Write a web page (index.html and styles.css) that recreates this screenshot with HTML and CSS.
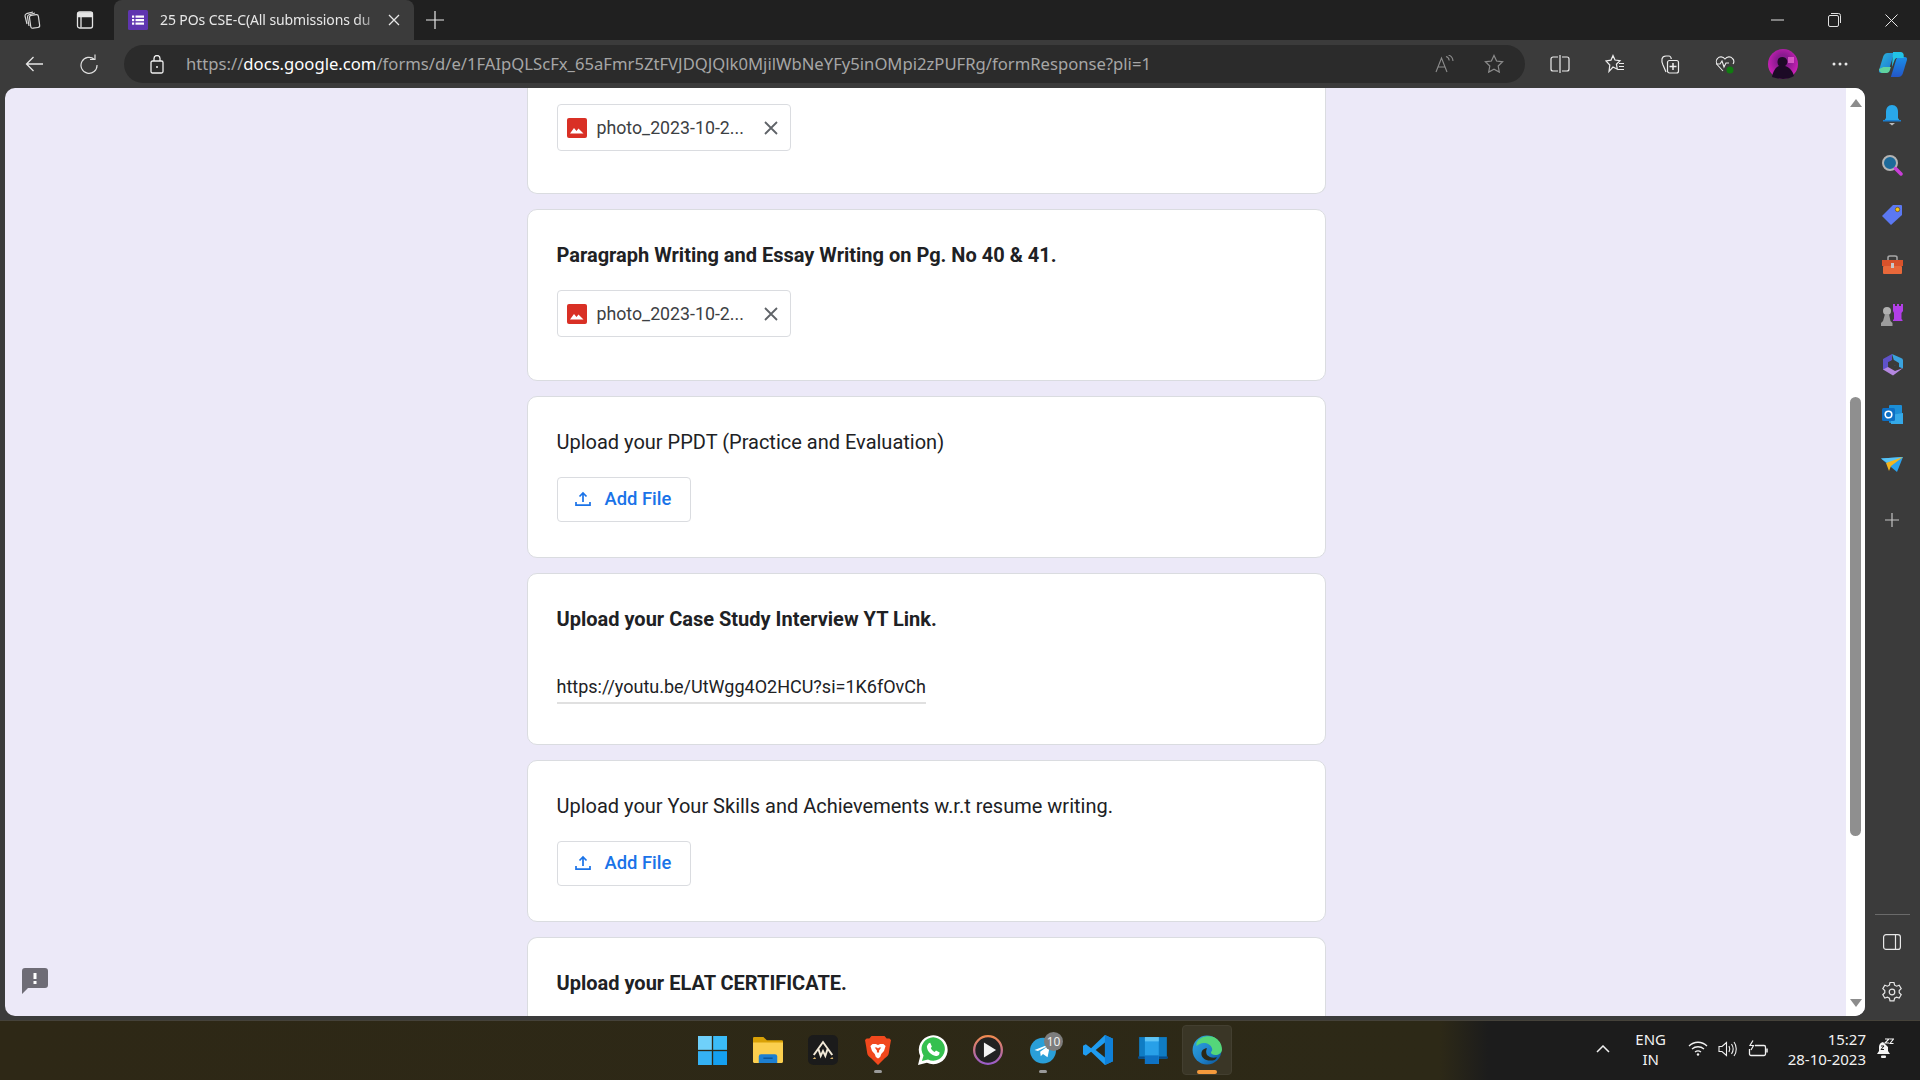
FILE: index.html
```html
<!DOCTYPE html>
<html lang="en">
<head>
<meta charset="utf-8">
<title>25 POs CSE-C</title>
<link rel="stylesheet" href="styles.css">
</head>
<body>
<div class="window">
  <header class="titlebar">
    <div class="tb-left">
      <svg width="20" height="20" viewBox="0 0 20 20" fill="none" stroke="#d8d8d8" stroke-width="1.2"><rect x="8" y="5" width="9" height="13" rx="2" transform="rotate(-8 12 11)"/><path d="M5 14 3 6c0-1 .5-2 1.500-2.300L11 2M7 16 5.500 7c0-1 .5-2 1.500-2.300L13 3"/></svg>
      <svg width="20" height="20" viewBox="0 0 20 20" fill="none" stroke="#e4e4e4" stroke-width="1.300"><rect x="2.500" y="2" width="15" height="16" rx="2"/><path d="M3 3h14v3.500H3z" fill="#e4e4e4"/><path d="M6 6v11.500"/></svg>
    </div>
    <div class="tab">
      <svg width="20" height="20" viewBox="0 0 20 20"><rect width="20" height="20" rx="1.500" fill="#5f35b0"/><g fill="#fff"><rect x="4" y="5.500" width="2.200" height="2.200"/><rect x="4" y="9" width="2.200" height="2.200"/><rect x="4" y="12.500" width="2.200" height="2.200"/><rect x="7.500" y="5.500" width="8.500" height="2.200"/><rect x="7.500" y="9" width="8.500" height="2.200"/><rect x="7.500" y="12.500" width="8.500" height="2.200"/></g></svg>
      <span class="tab-title">25 POs CSE-C(All submissions du</span>
      <svg width="12" height="12" viewBox="0 0 12 12" stroke="#e8e8e8" stroke-width="1.300"><path d="M1 1l10 10M11 1 1 11"/></svg>
    </div>
    <svg class="newtab" width="18" height="18" viewBox="0 0 18 18" stroke="#e8e8e8" stroke-width="1.200"><path d="M9 0v18M0 9h18"/></svg>
    <div class="wincontrols">
      <svg width="13" height="12" viewBox="0 0 13 12" stroke="#e0e0e0" stroke-width="1"><path d="M0 6h13"/></svg>
      <svg width="13" height="14" viewBox="0 0 13 14" fill="none" stroke="#e0e0e0" stroke-width="1"><rect x=".5" y="2.500" width="10" height="11" rx="1.500"/><path d="M3 .5h7.500a2 2 0 0 1 2 2V10"/></svg>
      <svg width="13" height="13" viewBox="0 0 13 13" stroke="#e8e8e8" stroke-width="1"><path d="M.5.500l12 12M12.500.500l-12 12"/></svg>
    </div>
  </header>
  <nav class="toolbar">
    <svg class="nav-back" width="18" height="16" viewBox="0 0 18 16" fill="none" stroke="#e6e6e6" stroke-width="1.300"><path d="M18 8H1.500M8.500 1 1.500 8l7 7"/></svg>
    <svg class="nav-reload" width="18" height="20" viewBox="0 0 18 20" fill="none" stroke="#e0e0e0" stroke-width="1.200"><path d="M14.500 5.500A8 8 0 1 0 17 11"/><path d="M15 .5v5h-5"/></svg>
    <div class="omnibox">
      <svg width="14" height="19" viewBox="0 0 14 19" fill="none" stroke="#f0f0f0" stroke-width="1.300"><rect x="1" y="6" width="12" height="12" rx="1.500"/><path d="M4 6V3.500a3 3 0 0 1 6 0V6"/><circle cx="7" cy="12" r="1" fill="#f0f0f0" stroke="none"/></svg>
      <span class="url"><span class="url-dim">https://</span><span class="url-host">docs.google.com</span><span class="url-dim">/forms/d/e/1FAIpQLScFx_65aFmr5ZtFVJDQJQlk0MjilWbNeYFy5inOMpi2zPUFRg/formResponse?pli=1</span></span>
      <svg class="readaloud" width="20" height="18" viewBox="0 0 20 18" fill="none" stroke="#8c8c8c" stroke-width="1.100"><path d="M1 17 6.500 3l5.500 14M3 12h7"/><path d="M11 1.500c2 .5 3 2 3.200 4M13.500 0c2.800 1 4.300 3 4.500 6"/></svg>
      <svg width="20" height="20" viewBox="0 0 20 20" fill="none" stroke="#8c8c8c" stroke-width="1.200"><path d="m10 1.500 2.600 5.500 6 .8-4.400 4.200 1.100 6L10 15.100 4.700 18l1.100-6L1.400 7.800l6-.8z"/></svg>
    </div>
    <div class="tools">
      <svg width="20" height="20" viewBox="0 0 20 20" fill="none" stroke="#ececec" stroke-width="1.200"><path d="M8 3H3a2 2 0 0 0-2 2v10a2 2 0 0 0 2 2h5M12 3h5a2 2 0 0 1 2 2v10a2 2 0 0 1-2 2h-5M10 1v18"/></svg>
      <svg width="20" height="20" viewBox="0 0 20 20" fill="none" stroke="#ececec" stroke-width="1.200"><path d="m8 1.500 2 4.500 5 .7-3.600 3.500.9 5L8 13 4 17.500l.8-6.500L1 7l5-.9zM14 9.500h5M14 12.500h5M13 15.500h6"/></svg>
      <svg width="20" height="20" viewBox="0 0 20 20" fill="none" stroke="#ececec" stroke-width="1.200"><path d="M6 18 3 11c-.8-2-1.500-4-1-6 .4-2 2-3 4-3h3c1.500 0 2 1 2.300 3"/><rect x="7.500" y="6.500" width="11" height="12.500" rx="2"/><path d="M13 9v7M9.500 12.500h7" stroke-width="1.500"/></svg>
      <svg width="20" height="20" viewBox="0 0 20 20" fill="none" stroke="#ececec" stroke-width="1.100"><path d="M8 17 2.500 11C1 9 1 6 2.500 4.500 4.500 2 8 2.500 10 5c2-2.500 5.500-3 7.500-.5 1.500 1.500 1.500 4 .5 5.500"/><path d="M1 10h4l2-3 2 6 2-4h3"/><circle cx="15" cy="16" r="3.500" fill="#107c10" stroke="none"/></svg>
      <svg width="30" height="30" viewBox="0 0 30 30"><defs><radialGradient id="av" cx=".5" cy=".4" r=".7"><stop offset=".3" stop-color="#8a1a90"/><stop offset="1" stop-color="#e824c8"/></radialGradient></defs><circle cx="15" cy="15" r="15" fill="url(#av)"/><path d="M4 28c1-6 4-10 7-11-2-2-2-6 0-8 3-2 7-1 8 2 1 2 0 5-2 6 4 1 8 5 9 10-3 2-7 3-11 3s-8-1-11-2z" fill="#1c0a26"/><rect x="20" y="8" width="6" height="6" fill="#f070d8" opacity=".7"/></svg>
      <svg width="16" height="4" viewBox="0 0 16 4" fill="#e8e8e8"><circle cx="2" cy="2" r="1.500"/><circle cx="8" cy="2" r="1.500"/><circle cx="14" cy="2" r="1.500"/></svg>
      <svg width="30" height="28" viewBox="0 0 28 28" preserveAspectRatio="none"><defs><linearGradient id="cp1" x1="0" y1="0" x2="1" y2="1"><stop offset="0" stop-color="#2bb8d8"/><stop offset="1" stop-color="#1c6fd8"/></linearGradient><linearGradient id="cp2" x1="0" y1="0" x2="0" y2="1"><stop offset="0" stop-color="#1a8fe8"/><stop offset="1" stop-color="#2456c8"/></linearGradient></defs><path d="M9 3c-2 0-3 1-4 3L1 20c-.5 2 .5 3 2 3h4c1.500 0 2.500-1 3-2.500L15 3z" fill="url(#cp1)"/><path d="M1 19c0 2 1.500 4 3.500 4H8c1.500 0 2.500-1 3-2.500l1-3.500H5z" fill="#5fd3a0"/><path d="M19 27c2 0 3-1 4-3l4-14c.5-2-.5-3-2-3h-5c-1.500 0-2.500 1-3 2.500L12 27z" fill="url(#cp2)"/><path d="M14 2h7c2 0 3 1.500 3 3v3h-6c-1 0-2 .5-2.500 2L13 17z" fill="#22c3e6"/></svg>
    </div>
  </nav>
  <div class="workspace">
    <main class="page">
      <section class="form">
        <article class="card card-clipped">
          <div class="filechip">
            <svg width="20" height="20" viewBox="0 0 20 20"><rect width="20" height="20" rx="2" fill="#d93025"/><path d="M3 15.500 7 10l2.500 3 2-2.500 5 5z" fill="#fff"/></svg>
            <span class="filename">photo_2023-10-2...</span>
            <svg class="chip-x" width="14" height="14" viewBox="0 0 14 14" stroke="#5f6368" stroke-width="1.800"><path d="m1 1 12 12M13 1 1 13"/></svg>
          </div>
        </article>
        <article class="card card-a">
          <h2 class="q q-bold">Paragraph Writing and Essay Writing on Pg. No 40 &amp; 41.</h2>
          <div class="filechip">
            <svg width="20" height="20" viewBox="0 0 20 20"><rect width="20" height="20" rx="2" fill="#d93025"/><path d="M3 15.500 7 10l2.500 3 2-2.500 5 5z" fill="#fff"/></svg>
            <span class="filename">photo_2023-10-2...</span>
            <svg class="chip-x" width="14" height="14" viewBox="0 0 14 14" stroke="#5f6368" stroke-width="1.800"><path d="m1 1 12 12M13 1 1 13"/></svg>
          </div>
        </article>
        <article class="card card-b">
          <h2 class="q">Upload your PPDT (Practice and Evaluation)</h2>
          <button class="addfile">
            <svg width="16" height="16" viewBox="0 0 16 16" fill="none" stroke="#1a73e8" stroke-width="1.700"><path d="M8 11V2M4.500 5.500 8 2l3.500 3.500M1 11v3.200h14V11"/></svg>
            <span>Add File</span>
          </button>
        </article>
        <article class="card card-a">
          <h2 class="q q-bold">Upload your Case Study Interview YT Link.</h2>
          <div class="answer"><span class="answer-text">https://youtu.be/UtWgg4O2HCU?si=1K6fOvCh</span></div>
        </article>
        <article class="card card-b">
          <h2 class="q">Upload your Your Skills and Achievements w.r.t resume writing.</h2>
          <button class="addfile">
            <svg width="16" height="16" viewBox="0 0 16 16" fill="none" stroke="#1a73e8" stroke-width="1.700"><path d="M8 11V2M4.500 5.500 8 2l3.500 3.500M1 11v3.200h14V11"/></svg>
            <span>Add File</span>
          </button>
        </article>
        <article class="card card-d">
          <h2 class="q q-bold">Upload your ELAT CERTIFICATE.</h2>
        </article>
      </section>
      <svg class="feedback" width="26" height="26" viewBox="0 0 26 26"><path d="M3 0h20a3 3 0 0 1 3 3v14a3 3 0 0 1-3 3H6l-6 6V3a3 3 0 0 1 3-3z" fill="#6e6c76"/><rect x="11.500" y="5" width="3" height="6" fill="#fff"/><rect x="11.500" y="13" width="3" height="3" fill="#fff"/></svg>
      <div class="scrollbar">
        <span class="arrow arrow-up"></span>
        <span class="thumb"></span>
        <span class="arrow arrow-down"></span>
      </div>
    </main>
    <aside class="sidebar">
      <div class="side-icons">
        <svg width="20" height="22" viewBox="0 0 20 22"><path d="M10 1c-4 0-6 3-6 7v6L2 17h16l-2-3V8c0-4-2-7-6-7z" fill="#29a8ea"/><path d="M1 16h18v1.500H1z" fill="#1b7fd0"/><path d="M7 19h6l-3 2.500z" fill="#bbb"/></svg>
        <svg width="22" height="22" viewBox="0 0 22 22"><circle cx="9" cy="9" r="7" fill="#1d6a9a" stroke="#b4b4b4" stroke-width="2"/><path d="m14.500 14.500 5.500 5.500" stroke="#c93ed8" stroke-width="3.500" stroke-linecap="round"/></svg>
        <svg width="22" height="22" viewBox="0 0 22 22"><path d="M12 1h8a1 1 0 0 1 1 1v9L10 21 1 12z" fill="#5b78f2"/><circle cx="16.500" cy="5.500" r="2.200" fill="#f5c518" stroke="#5b3a00" stroke-width=".6"/></svg>
        <svg width="23" height="20" viewBox="0 0 23 20"><path d="M7 5V2.500C7 1.500 8 1 9 1h5c1 0 2 .5 2 1.500V5" fill="none" stroke="#a8a8a8" stroke-width="1.500"/><rect x="1" y="5" width="21" height="6" fill="#d9522b"/><rect x="2" y="11" width="19" height="8" rx="1" fill="#e8683a"/><rect x="10" y="8" width="3" height="5" fill="#c8c8c8"/></svg>
        <svg width="24" height="24" viewBox="0 0 24 24"><path d="M13 1h2v2h2V1h2v2h2V1h2v7l-1.500 2v6l1 1v1H13v-1l1-1v-6l-1-2z" fill="#b23fe8"/><circle cx="7" cy="8" r="4" fill="#b0b0b0"/><path d="M5 11h4l1.500 7 2 2v3H1v-3l2-2z" fill="#9c9c9c"/></svg>
        <svg width="21" height="22" viewBox="0 0 21 22"><path d="M10 0 19 4a2.500 2.500 0 0 1 2 2.500v8L12 11V6.500z" fill="#3aa3df"/><path d="M1 5 10 0v6L6 9v6l-5 1z" fill="#5f52c9"/><path d="M1 15.500 6 13l7 4 8-3-10 7.500z" fill="#b487e0"/><path d="M6 8l6-2 5 3v5l-5-3-6 2z" fill="#3b3b3b"/></svg>
        <svg width="21" height="20" viewBox="0 0 21 20"><rect x="7" y="0" width="13" height="18" rx="1" fill="#1c8ed6"/><path d="M9 10 21 8v11H9z" fill="#35a9e8"/><rect x="0" y="3" width="13" height="13" rx="1.500" fill="#0e6fc4"/><circle cx="6.500" cy="9.500" r="3.300" fill="none" stroke="#fff" stroke-width="1.600"/></svg>
        <svg width="22" height="16" viewBox="0 0 22 16"><path d="M0 1.500 22 0 16 15l-6-5z" fill="#2aa2ee"/><path d="M0 1.500 22 0 8 7z" fill="#59c4f5"/><path d="M22 0 5 6l3 8 2-5z" fill="#f3b61f"/></svg>
        <svg class="side-plus" width="14" height="14" viewBox="0 0 14 14" stroke="#c4c4c4" stroke-width="1.200"><path d="M7 0v14M0 7h14"/></svg>
      </div>
      <div class="side-bottom">
        <div class="side-divider"></div>
        <svg class="side-panel" width="18" height="16" viewBox="0 0 18 16" fill="none" stroke="#e8e8e8" stroke-width="1.200"><rect x=".6" y=".6" width="16.800" height="14.800" rx="2.500"/><path d="M12.500 1v14"/></svg>
        <svg width="22" height="22" viewBox="0 0 22 22" fill="none" stroke="#e6e6e6" stroke-width="1.200"><path d="M9 1.500h4l.6 2.700 2 1 2.600-.9 2 3.400-2 1.900v2.200l2 1.900-2 3.400-2.600-.9-2 1-.6 2.700H9l-.6-2.700-2-1-2.600.9-2-3.400 2-1.900V9.600l-2-1.900 2-3.400 2.600.9 2-1z"/><circle cx="11" cy="11" r="2.800"/></svg>
      </div>
    </aside>
  </div>
  <div class="window-foot"></div>
  <footer class="taskbar">
    <div class="task-apps">
      <span class="app"><svg width="29" height="29" viewBox="0 0 26 26"><rect width="12.400" height="12.400" fill="#6fd0fa"/><rect x="13.600" width="12.400" height="12.400" fill="#3bbcf8"/><rect y="13.600" width="12.400" height="12.400" fill="#35b2f4"/><rect x="13.600" y="13.600" width="12.400" height="12.400" fill="#15a0f0"/></svg></span>
      <span class="app"><svg width="30" height="28" viewBox="0 0 26 26" preserveAspectRatio="none"><path d="M0 2a1 1 0 0 1 1-1h8l3 3h13a1 1 0 0 1 1 1v3H0z" fill="#d9a106"/><path d="M0 6h26v18a1 1 0 0 1-1 1H1a1 1 0 0 1-1-1z" fill="#fbcf4f"/><path d="M5 19a2 2 0 0 1 2-2h12a2 2 0 0 1 2 2v6H5z" fill="#1d7fd1"/><rect x="9" y="20" width="8" height="1.200" fill="#0b4f8f"/></svg></span>
      <span class="app"><svg width="30" height="30" viewBox="0 0 26 30" preserveAspectRatio="none"><rect width="26" height="30" rx="5" fill="#1b1b1b"/><path d="M5 20 13 7l8 13M9 14l2 7 2-5 2 5 2-7" fill="none" stroke="#f3ead8" stroke-width="1.700"/><path d="M4 24h3l-1-2zM19 24h3l-1-2z" fill="#d8b36c"/></svg></span>
      <span class="app app-open"><svg width="26" height="29" viewBox="0 0 24 29" preserveAspectRatio="none"><path d="M6 0h12l2 2.500h2.500L24 4l-1 6-1 7c0 2-2 4-4 5.500L12 29l-6-6.500c-2-1.500-4-3.500-4-5.500L1 10 0 4l1.500-1.500H4z" fill="#f1481d"/><path d="M7 8h3l2 1 2-1h3l2 2-1.500 5-2.500 3-1 3-2 1.500L10 21l-1-3-2.500-3L5 10z" fill="#fff"/><path d="M9 11.500h2l1 1 1-1h2l-2 3v2h-2v-2z" fill="#f1481d"/></svg></span>
      <span class="app"><svg width="30" height="30" viewBox="0 0 27 27"><path d="M0 27 2 19A13 13 0 1 1 8 25z" fill="#fff"/><path d="M3.500 23.500 5 18.500A10.500 10.500 0 1 1 9 22z" fill="#35c04f"/><path d="M9.500 7.500 11 7l1.500 3.500-1 1.300c.7 1.500 1.800 2.700 3.500 3.500l1.200-1.300 3.300 1.700-.5 1.800c-.5 1-2 1.500-3 1.300-4.500-.8-7.500-4-8-8-.1-1 .5-2 1.500-3z" fill="#fff"/></svg></span>
      <span class="app"><svg width="30" height="30" viewBox="0 0 26 26"><defs><linearGradient id="pl" x1="0" y1="0" x2="0" y2="1"><stop offset="0" stop-color="#f08a50"/><stop offset="1" stop-color="#9a5cc8"/></linearGradient></defs><circle cx="13" cy="13" r="12" fill="#222" stroke="url(#pl)" stroke-width="2"/><path d="M9.500 6.500 20 13 9.500 19.500z" fill="#f4f4f4"/></svg></span>
      <span class="app app-open"><svg width="26" height="28" viewBox="0 0 23 25" preserveAspectRatio="none"><circle cx="11.500" cy="13" r="11.500" fill="#2a9fd8"/><path d="M4 12.500 18 7l-2.500 12-4-3-2 2-.5-4 7-5-9 4.500z" fill="#fff"/></svg><span class="badge">10</span></span>
      <span class="app"><svg width="30" height="30" viewBox="0 0 26 26"><path d="M19 0 26 3.300v19.400L19 26 7 14.500 2.500 18 0 16.700V9.300L2.500 8 7 11.500z" fill="#1f9cf0"/><path d="M19 6.500 11 13l8 6.500z" fill="#2b2817"/><path d="M19 0 26 3.300v19.400L19 26z" fill="#0f80d8"/></svg></span>
      <span class="app"><svg width="30" height="28" viewBox="0 0 26 26" preserveAspectRatio="none"><rect x="1" y="1" width="24" height="20" fill="#0f7cc4"/><rect x="0" y="19" width="26" height="2" fill="#064c8c"/><rect x="6" y="1" width="12" height="25" fill="#28a0e8"/><rect x="6" y="1" width="12" height="4" fill="#5fc4f5"/><rect x="6" y="18" width="12" height="8" fill="#0e72c4"/></svg></span>
      <span class="app app-active"><svg width="30" height="30" viewBox="0 0 27 27"><defs><linearGradient id="edg" x1="0" y1="0" x2="1" y2="1"><stop offset="0" stop-color="#2fa8e0"/><stop offset=".6" stop-color="#1d7fc8"/><stop offset="1" stop-color="#0c4f90"/></linearGradient></defs><circle cx="13.500" cy="13.500" r="13" fill="url(#edg)"/><path d="M4 7C7 1 15 0 20 2c4 2 7 6 7 11 0 3-3 5-6 5-2 0-4-1-4-2.500 1-1 1.500-2 1-3.500C17 8 11 6 7 8c-2 .8-3 2-3 2z" fill="#54d67a"/><path d="M13.500 12c-3 0-5 2-5 5s3 6 8 6 5-1.500 6-3c-4 1-7 0-9-2-1-2-1-4 0-6z" fill="#2b2817"/></svg></span>
    </div>
    <div class="tray">
      <svg class="chev" width="14" height="8" viewBox="0 0 14 8" fill="none" stroke="#f0f0f0" stroke-width="1.500"><path d="m1 7 6-6 6 6"/></svg>
      <div class="lang"><span>ENG</span><span>IN</span></div>
      <div class="tray-icons">
        <svg width="20" height="15" viewBox="0 0 20 15" fill="none" stroke="#f0f0f0" stroke-width="1.300"><path d="M1 5c5-5 13-5 18 0M4 8c3.500-3 8.500-3 12 0M7 11c2-1.500 4-1.500 6 0"/><circle cx="10" cy="13.500" r="1.200" fill="#f0f0f0" stroke="none"/></svg>
        <svg width="20" height="16" viewBox="0 0 20 16" fill="none" stroke="#f0f0f0" stroke-width="1.100"><path d="M1 5.500h3L8.500 1.500v13L4 10.500H1zM11 5c1 2 1 4 0 6M13.500 3c2 3 2 7 0 10M16 1c3 4 3 10 0 14"/></svg>
        <svg width="20" height="18" viewBox="0 0 20 18" fill="none" stroke="#f0f0f0" stroke-width="1.300"><path d="M7 5.500h9a1.500 1.500 0 0 1 1.500 1.500v7a1.500 1.500 0 0 1-1.500 1.500H3A1.500 1.500 0 0 1 1.500 14V9"/><path d="M19 8.500v4" stroke-width="1.500"/><path d="M5 .5 2 5.500h3.500L3 10" stroke-width="1.200"/></svg>
      </div>
      <div class="clock"><span>15:27</span><span>28-10-2023</span></div>
      <svg class="bell" width="18" height="22" viewBox="0 0 18 22"><path d="M7 4c-3 .5-4 3-4 5v4l-2 3h13l-2-3V9" fill="#f4f4f4"/><rect x="5" y="17.500" width="5" height="2.500" rx="1" fill="#f4f4f4"/><path d="M9 1h4l-4 4h4M14 1h3.500L14 5.500h3.500" fill="none" stroke="#f4f4f4" stroke-width="1.100"/><path d="M5 8h3l-3 3.500h3" fill="none" stroke="#1c1c1c" stroke-width="1"/></svg>
    </div>
  </footer>
</div>
</body>
</html>
```
FILE: styles.css
```css
* { box-sizing: border-box; }
html, body { margin: 0; height: 100%; overflow: hidden; }
body { font-family: Roboto, "Liberation Sans", sans-serif; background: #3b3b3b; }
svg { display: block; flex: none; }
.window { width: 1920px; height: 1080px; display: flex; flex-direction: column; }

.titlebar { height: 40px; background: #202020; display: flex; align-items: center; flex: none; }
.tb-left { width: 114px; flex: none; display: flex; align-items: center; gap: 33px; padding-left: 22px; }
.tab { width: 300px; flex: none; height: 40px; background: #3b3b3b; border-radius: 8px 8px 0 0; display: flex; align-items: center; padding: 0 14px; gap: 12px; color: #e8e8e8; }
.tab-title { width: 218px; margin-right: -2px; padding-bottom: 2px; overflow: hidden; white-space: nowrap; font: 14px "Noto Sans", "Open Sans", sans-serif; letter-spacing: -.1px; -webkit-mask-image: linear-gradient(90deg, #000 90%, rgba(0,0,0,.25)); mask-image: linear-gradient(90deg, #000 90%, rgba(0,0,0,.25)); }
.newtab { margin-left: 12px; }
.wincontrols { margin-left: auto; display: flex; align-items: center; gap: 44px; padding-right: 22px; }

.toolbar { height: 48px; background: #3b3b3b; display: flex; align-items: center; flex: none; }
.nav-back { margin-left: 25px; }
.nav-reload { margin-left: 37px; }
.omnibox { margin-left: 26px; width: 1401px; height: 38px; background: #2b2b2b; border-radius: 19px; display: flex; align-items: center; padding: 0 21px 0 26px; }
.url { margin-left: 22px; flex: 1; padding-bottom: 2px; font: 16.650px "Noto Sans", "Open Sans", sans-serif; white-space: nowrap; overflow: hidden; }
.url-dim { color: #a6a6a6; }
.url-host { color: #fff; }
.readaloud { margin-right: 29px; }
.tools { margin-left: 7px; display: grid; grid-template-columns: 55px 55px 55px 55px 62px 52px 54px; align-items: center; justify-items: center; }

.workspace { height: 928px; display: flex; flex: none; }
.page { position: relative; margin-left: 5px; width: 1860px; background: #ece9f8; border-radius: 10px; overflow: hidden; display: flex; }
.form { width: 1841px; display: flex; flex-direction: column; align-items: center; gap: 15px; padding-left: 1px; }
.card { width: 799px; background: #fff; border: 1px solid #dadce0; border-radius: 10px; padding: 0 29px; flex: none; }
.card-clipped { height: 106px; border-top: 0; border-radius: 0 0 10px 10px; padding-top: 16px; }
.card-a { height: 172px; padding-top: 32px; }
.card-b { height: 162px; padding-top: 32px; }
.card-d { height: 90px; padding-top: 32px; border-bottom: 0; border-radius: 10px 10px 0 0; }

.q { margin: 0; font-size: 20px; line-height: 26px; font-weight: 400; color: #202124; }
.q-bold { font-weight: 700; }
.filechip { width: 234px; height: 47px; border: 1px solid #dadce0; border-radius: 4px; display: flex; align-items: center; padding: 0 9px; color: #3c4043; }
.card-a .filechip { margin-top: 22px; }
.filename { margin-left: 10px; flex: 1; font-size: 17.750px; white-space: nowrap; }
.chip-x { margin-right: 3px; }
.addfile { margin-top: 22px; width: 134px; height: 45px; background: #fff; border: 1px solid #dadce0; border-radius: 4px; display: flex; align-items: center; padding: 0 0 2px 17px; gap: 14px; color: #1a73e8; font: 500 18.400px Roboto, sans-serif; }
.answer { margin-top: 40px; width: 369px; height: 32px; padding-top: 2px; border-bottom: 2px solid #e0e0e0; }
.answer-text { font-size: 18px; line-height: 26px; color: #202124; white-space: nowrap; }

.feedback { position: absolute; left: 17px; bottom: 22px; }
.scrollbar { width: 19px; background: #fff; position: relative; }
.arrow { position: absolute; width: 0; height: 0; left: 4px; border-left: 6px solid transparent; border-right: 6px solid transparent; }
.arrow-up { top: 11px; border-bottom: 8px solid #8c8c8c; }
.arrow-down { bottom: 9px; border-top: 8px solid #8c8c8c; }
.thumb { position: absolute; left: 4px; top: 309px; width: 11px; height: 439px; border-radius: 6px; background: #8f8f8f; }

.sidebar { width: 55px; display: flex; flex-direction: column; align-items: center; padding: 2px 1px 13px 0; }
.side-icons { display: grid; grid-auto-rows: 50px; align-items: center; justify-items: center; }
.side-plus { margin-top: 10px; }
.side-bottom { margin-top: auto; display: flex; flex-direction: column; align-items: center; }
.side-divider { width: 35px; height: 1px; background: #6a6a6a; margin-bottom: 19px; }
.side-panel { margin-bottom: 31px; }

.window-foot { height: 4px; background: #3b3b3b; flex: none; }
.taskbar { height: 60px; background: linear-gradient(90deg, #2e2816 0%, #2d2917 75%, #1c1c1c 77.500%, #1c1c1c 100%); border-top: 1px solid #45423a; display: flex; align-items: center; justify-content: center; position: relative; padding-bottom: 1px; }
.task-apps { display: flex; align-items: center; margin-right: 3px; }
.app { width: 55px; height: 50px; display: flex; align-items: center; justify-content: center; position: relative; }
.app-open::after { content: ""; position: absolute; left: 24px; bottom: 2px; width: 8px; height: 3px; border-radius: 2px; background: #9a9a9a; }
.app-active { width: 50px; margin-left: 2px; background: #3a3626; border-radius: 4px; border: 1px solid #433f30; }
.app-active::after { content: ""; position: absolute; left: 14px; bottom: 0; width: 20px; height: 4px; border-radius: 2px; background: #f59a3c; }
.badge { position: absolute; left: 29px; top: 7px; width: 19px; height: 19px; border-radius: 50%; background: #7d7d7d; color: #f0f0f0; font: 12px/19px "Noto Sans", sans-serif; text-align: center; }
.tray { position: absolute; right: 0; top: -2px; height: 59px; display: flex; align-items: center; color: #f2f2f2; font: 15px/20px "Noto Sans", "Open Sans", sans-serif; }
.chev { margin-right: 21px; }
.lang { display: flex; flex-direction: column; align-items: center; width: 40px; margin-right: 17px; }
.tray-icons { display: flex; align-items: center; gap: 10px; margin-right: 20px; }
.clock { display: flex; flex-direction: column; align-items: flex-end; margin-right: 10px; }
.bell { margin-right: 26px; }
```
